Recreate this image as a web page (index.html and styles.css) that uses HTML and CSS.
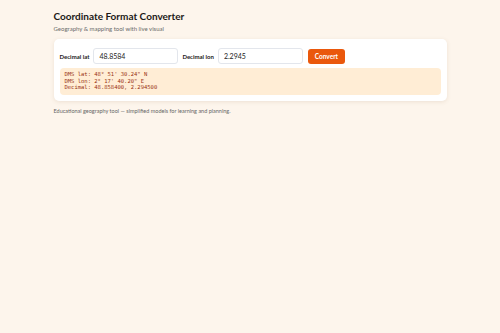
FILE: index.html
```html
<!DOCTYPE html>
<html lang="en">
<head>
  <meta charset="UTF-8">
  <meta name="viewport" content="width=device-width, initial-scale=1.0">
  <title>Coordinate Format Converter</title>
  <link rel="stylesheet" href="styles.css">
</head>
<body>
  <div class="wrap">
    <header>
      <h1>Coordinate Format Converter</h1>
      <p class="sub">Geography &amp; mapping tool with live visual</p>
    </header>

    <section class="card">
      <div class="row">
        <label for="lat">Decimal lat</label>
        <input id="lat" type="text" value="48.8584">
        <label for="lon">Decimal lon</label>
        <input id="lon" type="text" value="2.2945">
        <button class="btn">Convert</button>
      </div>
      <pre class="result">DMS lat: 48° 51' 30.24" N
DMS lon: 2° 17' 40.20" E
Decimal: 48.858400, 2.294500</pre>
    </section>

    <p class="foot">Educational geography tool — simplified models for learning and planning.</p>
  </div>
</body>
</html>
```

FILE: styles.css
```css
body {
  margin: 0;
  padding: 0;
  background: #fdf5ec;
  font-family: Lato, "Noto Sans", sans-serif;
  color: #1c1917;
}
.wrap {
  width: 393px;
  margin: 0 auto;
  padding-top: 9px;
}
header h1 {
  margin: 0;
  font-size: 10px;
  font-weight: 700;
  line-height: 14px;
}
.sub {
  margin: 2px 0 0;
  font-size: 6px;
  line-height: 8px;
  color: #6b6b6b;
}
.card {
  margin-top: 6px;
  background: #fff;
  border-radius: 5px;
  padding: 9px 6px 6px;
  box-shadow: 0 1px 4px rgba(120, 80, 40, 0.12);
}
.row {
  display: flex;
  align-items: center;
}
.row label {
  font-size: 6px;
  font-weight: 700;
  margin-right: 4px;
}
.row input {
  width: 85px;
  height: 16px;
  box-sizing: border-box;
  border: 1px solid #e3e6ec;
  border-radius: 3px;
  padding: 0 5px;
  font-family: inherit;
  font-size: 7px;
  color: #222;
  margin-right: 4px;
}
.btn {
  margin-left: 1px;
  width: 37px;
  height: 15px;
  border: 0;
  border-radius: 3px;
  background: #ea580c;
  color: #fff;
  font-family: inherit;
  font-weight: 700;
  font-size: 6.5px;
  padding: 0;
}
.result {
  margin: 4px 0 0;
  background: #ffedd5;
  border-radius: 4px;
  padding: 3px 5px;
  height: 27px;
  box-sizing: border-box;
  font-family: "DejaVu Sans Mono", monospace;
  font-size: 5.5px;
  line-height: 6.5px;
  color: #9a3412;
}
.foot {
  margin: 7px 0 0;
  font-size: 5.5px;
  color: #666;
}
```
